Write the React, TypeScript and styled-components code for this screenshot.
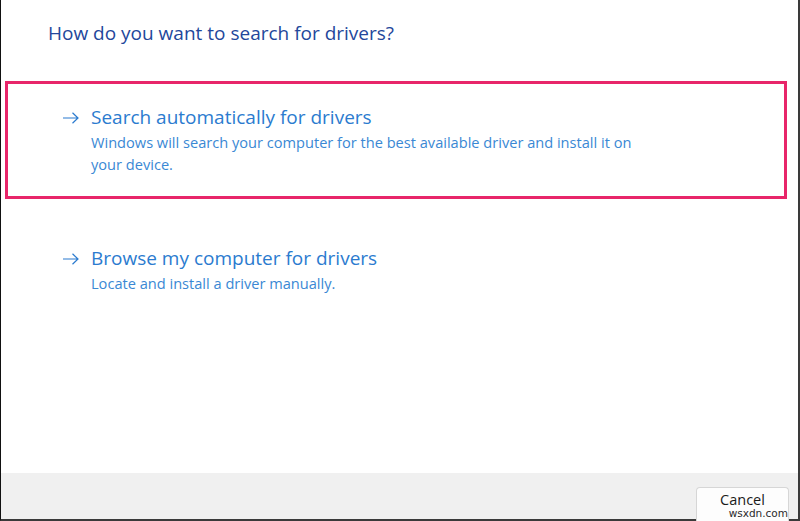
import styled, { createGlobalStyle } from "styled-components";

const GlobalStyle = createGlobalStyle`
  html, body {
    margin: 0;
    padding: 0;
    background: #fff;
  }
  body {
    font-family: "Open Sans", "Noto Sans", sans-serif;
  }
`;

const Frame = styled.div`
  width: 800px;
  height: 521px;
  box-sizing: border-box;
  border-left: 1px solid #111;
  border-right: 2px solid #3a3a3a;
  border-bottom: 2px solid #3a3a3a;
  display: flex;
  flex-direction: column;
  background: #fff;
  position: relative;
`;

const Main = styled.main`
  flex: 1;
  display: flex;
  flex-direction: column;
  padding: 19px 0 0 4px;
`;

const Title = styled.h1`
  margin: 0 0 0 43px;
  font-size: 19px;
  line-height: 28px;
  font-weight: 400;
  color: #23479b;
`;

const OptionList = styled.div`
  display: flex;
  flex-direction: column;
  gap: 23px;
  margin-top: 34px;
`;

const Option = styled.div<{ $selected?: boolean }>`
  width: 782px;
  box-sizing: border-box;
  display: flex;
  gap: 12px;
  padding: 19px 0 21px 54px;
  border: 3px solid ${(p) => (p.$selected ? "#e8266a" : "transparent")};
`;

const Arrow = styled.svg`
  width: 17px;
  height: 12px;
  margin-top: 9px;
  flex-shrink: 0;
`;

const OptionText = styled.div`
  display: flex;
  flex-direction: column;
`;

const OptionHeading = styled.div`
  font-size: 19px;
  line-height: 28px;
  color: #2b7bcf;
`;

const OptionDesc = styled.div`
  font-size: 14.6px;
  line-height: 22px;
  color: #3a88d4;
  max-width: 552px;
`;

const Footer = styled.footer`
  height: 46px;
  background: #f0f0f0;
  display: flex;
  justify-content: flex-end;
  align-items: flex-start;
  padding: 14px 9px 0 0;
  box-sizing: border-box;
`;

const Button = styled.button`
  width: 93px;
  height: 34px;
  border: 1px solid #d6d6d6;
  border-bottom: none;
  border-radius: 4px 4px 0 0;
  background: #fdfdfd;
  font-family: "Open Sans", "Noto Sans", sans-serif;
  font-size: 14.5px;
  line-height: 16px;
  color: #1a1a1a;
  padding: 0 0 10px;
`;

const Watermark = styled.span`
  position: absolute;
  right: 10px;
  bottom: 1px;
  font-family: "DejaVu Sans", sans-serif;
  font-size: 10.5px;
  line-height: 10px;
  color: #2a2a2a;
`;

const ArrowIcon = () => (
  <Arrow viewBox="0 0 17 12" fill="none">
    <path d="M1 6h15M10.5 0.8L16 6l-5.5 5.2" stroke="#2b7bcf" strokeWidth="1.2" />
  </Arrow>
);

export default function App() {
  return (
    <>
      <GlobalStyle />
      <Frame>
        <Main>
          <Title>How do you want to search for drivers?</Title>
          <OptionList>
            <Option $selected>
              <ArrowIcon />
              <OptionText>
                <OptionHeading>Search automatically for drivers</OptionHeading>
                <OptionDesc>
                  Windows will search your computer for the best available driver and install it on
                  your device.
                </OptionDesc>
              </OptionText>
            </Option>
            <Option>
              <ArrowIcon />
              <OptionText>
                <OptionHeading>Browse my computer for drivers</OptionHeading>
                <OptionDesc>Locate and install a driver manually.</OptionDesc>
              </OptionText>
            </Option>
          </OptionList>
        </Main>
        <Footer>
          <Button>Cancel</Button>
        </Footer>
        <Watermark>wsxdn.com</Watermark>
      </Frame>
    </>
  );
}
